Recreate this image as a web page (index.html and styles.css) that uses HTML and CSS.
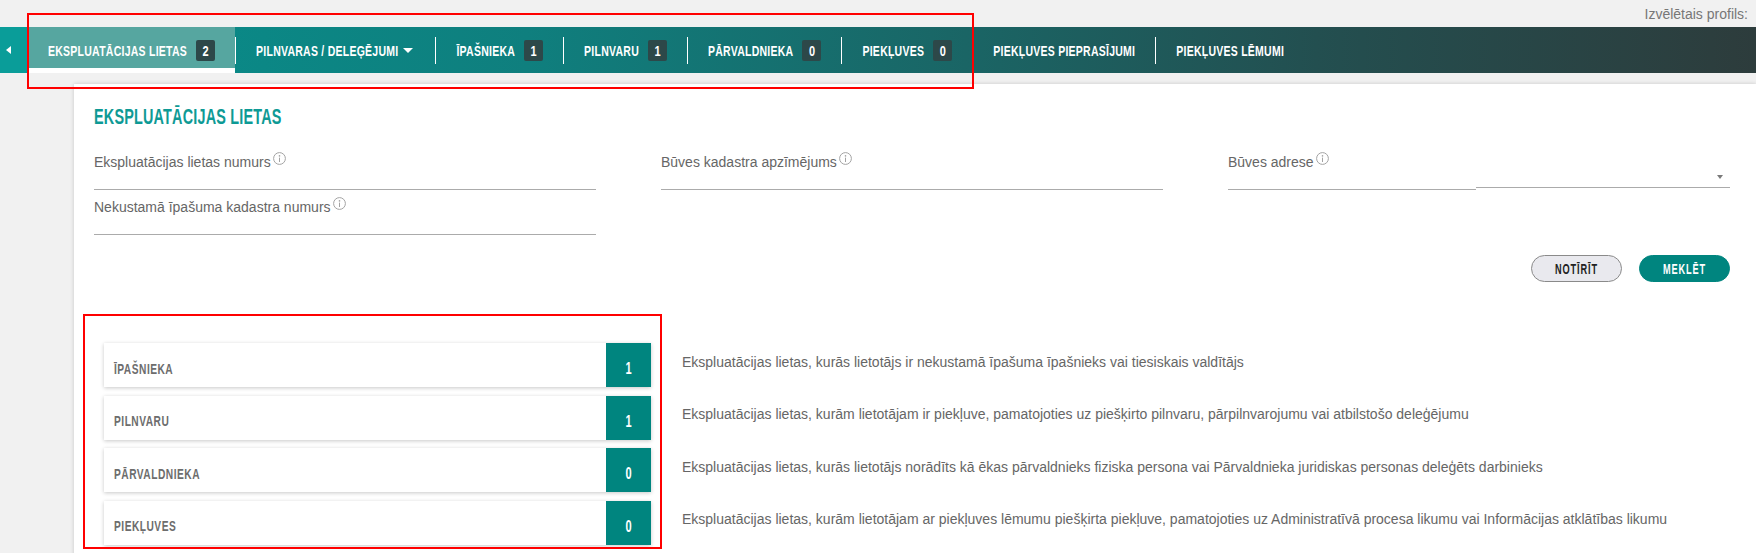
FILE: index.html
```html
<!DOCTYPE html>
<html lang="lv">
<head>
<meta charset="utf-8">
<title>Ekspluatācijas lietas</title>
<link rel="stylesheet" href="styles.css">
</head>
<body>
<header class="topbar"><span class="profile">Izvēlētais profils:</span></header>

<nav class="nav">
  <a class="nav-back" href="#"><span class="tri-left"></span></a>
  <a class="nav-item active" href="#"><span class="cond">EKSPLUATĀCIJAS LIETAS</span><span class="badge"><span class="cond">2</span></span></a>
  <span class="sep"></span>
  <a class="nav-item" href="#"><span class="cond">PILNVARAS / DELEĢĒJUMI</span><span class="caret"></span></a>
  <span class="sep"></span>
  <a class="nav-item" href="#"><span class="cond">ĪPAŠNIEKA</span><span class="badge"><span class="cond">1</span></span></a>
  <span class="sep"></span>
  <a class="nav-item" href="#"><span class="cond">PILNVARU</span><span class="badge"><span class="cond">1</span></span></a>
  <span class="sep"></span>
  <a class="nav-item" href="#"><span class="cond">PĀRVALDNIEKA</span><span class="badge"><span class="cond">0</span></span></a>
  <span class="sep"></span>
  <a class="nav-item" href="#"><span class="cond">PIEKĻUVES</span><span class="badge"><span class="cond">0</span></span></a>
  <span class="sep"></span>
  <a class="nav-item" href="#"><span class="cond">PIEKĻUVES PIEPRASĪJUMI</span></a>
  <span class="sep"></span>
  <a class="nav-item" href="#"><span class="cond">PIEKĻUVES LĒMUMI</span></a>
</nav>

<main class="page">
  <section class="card">
    <h1 class="title">EKSPLUATĀCIJAS LIETAS</h1>

    <div class="form-grid">
      <div class="field">
        <div class="label">Ekspluatācijas lietas numurs<svg class="info" viewBox="0 0 13 13" width="13" height="13"><circle cx="6.5" cy="6.5" r="5.9" fill="none" stroke="#a3a3a3" stroke-width="1"/><circle cx="6.5" cy="3.9" r="0.8" fill="#a3a3a3"/><rect x="6" y="5.6" width="1" height="4.4" fill="#a3a3a3"/></svg></div>
        <div class="input"></div>
      </div>
      <div class="field">
        <div class="label">Būves kadastra apzīmējums<svg class="info" viewBox="0 0 13 13" width="13" height="13"><circle cx="6.5" cy="6.5" r="5.9" fill="none" stroke="#a3a3a3" stroke-width="1"/><circle cx="6.5" cy="3.9" r="0.8" fill="#a3a3a3"/><rect x="6" y="5.6" width="1" height="4.4" fill="#a3a3a3"/></svg></div>
        <div class="input"></div>
      </div>
      <div class="combo">
        <div class="field combo-main">
          <div class="label">Būves adrese<svg class="info" viewBox="0 0 13 13" width="13" height="13"><circle cx="6.5" cy="6.5" r="5.9" fill="none" stroke="#a3a3a3" stroke-width="1"/><circle cx="6.5" cy="3.9" r="0.8" fill="#a3a3a3"/><rect x="6" y="5.6" width="1" height="4.4" fill="#a3a3a3"/></svg></div>
          <div class="input"></div>
        </div>
        <div class="select"><span class="select-caret"></span></div>
      </div>
      <div class="field">
        <div class="label">Nekustamā īpašuma kadastra numurs<svg class="info" viewBox="0 0 13 13" width="13" height="13"><circle cx="6.5" cy="6.5" r="5.9" fill="none" stroke="#a3a3a3" stroke-width="1"/><circle cx="6.5" cy="3.9" r="0.8" fill="#a3a3a3"/><rect x="6" y="5.6" width="1" height="4.4" fill="#a3a3a3"/></svg></div>
        <div class="input"></div>
      </div>
    </div>

    <div class="actions">
      <button class="btn btn-clear" type="button"><span class="cond">NOTĪRĪT</span></button>
      <button class="btn btn-search" type="button"><span class="cond">MEKLĒT</span></button>
    </div>

    <div class="summary">
      <div class="sum-row">
        <div class="sum-card"><span class="sum-label"><span class="cond">ĪPAŠNIEKA</span></span><span class="sum-count"><span class="cond">1</span></span></div>
        <p class="sum-desc">Ekspluatācijas lietas, kurās lietotājs ir nekustamā īpašuma īpašnieks vai tiesiskais valdītājs</p>
      </div>
      <div class="sum-row">
        <div class="sum-card"><span class="sum-label"><span class="cond">PILNVARU</span></span><span class="sum-count"><span class="cond">1</span></span></div>
        <p class="sum-desc">Ekspluatācijas lietas, kurām lietotājam ir piekļuve, pamatojoties uz piešķirto pilnvaru, pārpilnvarojumu vai atbilstošo deleģējumu</p>
      </div>
      <div class="sum-row">
        <div class="sum-card"><span class="sum-label"><span class="cond">PĀRVALDNIEKA</span></span><span class="sum-count"><span class="cond">0</span></span></div>
        <p class="sum-desc">Ekspluatācijas lietas, kurās lietotājs norādīts kā ēkas pārvaldnieks fiziska persona vai Pārvaldnieka juridiskas personas deleģēts darbinieks</p>
      </div>
      <div class="sum-row">
        <div class="sum-card"><span class="sum-label"><span class="cond">PIEKĻUVES</span></span><span class="sum-count"><span class="cond">0</span></span></div>
        <p class="sum-desc">Ekspluatācijas lietas, kurām lietotājam ar piekļuves lēmumu piešķirta piekļuve, pamatojoties uz Administratīvā procesa likumu vai Informācijas atklātības likumu</p>
      </div>
    </div>
  </section>
</main>

<div class="annot annot-nav"></div>
<div class="annot annot-cards"></div>
</body>
</html>
```

FILE: styles.css
```css
* { box-sizing: border-box; }

html, body { margin: 0; padding: 0; }

body {
  position: relative;
  width: 1756px;
  height: 553px;
  overflow: hidden;
  background: #f1f1f1;
  font-family: "Liberation Sans", Arial, sans-serif;
  color: #666;
}

/* tall, narrow display lettering (stand-in for a condensed display face) */
.cond {
  display: inline-block;
  font-family: "Liberation Sans", Arial, sans-serif;
  font-weight: 700;
  line-height: normal;
  transform: scaleY(1.38);
}

/* ---------- top bar ---------- */
.topbar {
  height: 27px;
  padding: 2px 8px 0 0;
  text-align: right;
  font-size: 14px;
  line-height: 25px;
  color: #777;
}

/* ---------- navigation ---------- */
.nav {
  display: flex;
  align-items: stretch;
  height: 46px;
  background: linear-gradient(90deg, #078f8c 0%, #0f7f7e 30%, #1a6565 55%, #234f50 75%, #2d3c3c 100%);
}

.nav-back {
  width: 28px;
  flex: 0 0 28px;
  display: flex;
  align-items: center;
  padding-left: 6px;
  background: #0a9d99;
}

.tri-left {
  width: 0;
  height: 0;
  border-top: 4.5px solid transparent;
  border-bottom: 4.5px solid transparent;
  border-right: 5.5px solid #fff;
}

.nav-item {
  display: flex;
  align-items: center;
  padding: 0 20px;
  color: #fff;
  text-decoration: none;
  white-space: nowrap;
  font-size: 10.5px;
  letter-spacing: 0.25px;
}

.nav-item.active {
  background: #56a6a0;
  box-shadow: inset 0 -5px 0 #fff;
}

.badge {
  display: inline-flex;
  align-items: center;
  justify-content: center;
  width: 19px;
  height: 21px;
  margin-left: 9px;
  border-radius: 2px;
  background: #2d4849;
  color: #fff;
  font-size: 11px;
  letter-spacing: 0;
}

.caret {
  width: 0;
  height: 0;
  margin: 0 2px 0 5px;
  border-left: 5px solid transparent;
  border-right: 5px solid transparent;
  border-top: 5px solid #fff;
}

.sep {
  align-self: center;
  width: 1px;
  height: 27px;
  background: #fff;
}

/* ---------- page / card ---------- */
.page {
  padding-top: 11px;
}

.card {
  margin-left: 74px;
  min-height: 480px;
  padding: 21px 26px 0 20px;
  background: #fff;
  box-shadow: 0 0 4px rgba(0, 0, 0, 0.18);
}

.title {
  margin: 0 0 25px 0;
  font-family: "Liberation Sans", Arial, sans-serif;
  font-weight: 700;
  font-size: 14.4px;
  letter-spacing: 0.2px;
  line-height: 22px;
  color: #0e9a95;
  transform: scaleY(1.5);
  transform-origin: left center;
}

/* ---------- form ---------- */
.form-grid {
  display: grid;
  grid-template-columns: repeat(3, 1fr);
  column-gap: 65px;
  row-gap: 7px;
}

.field {
  display: flex;
  flex-direction: column;
}

.label {
  font-size: 14px;
  line-height: 20px;
  color: #666;
  white-space: nowrap;
}

.info {
  margin-left: 2px;
  vertical-align: 2px;
}

.input {
  height: 18px;
  border-bottom: 1px solid #ababab;
}

.combo {
  display: flex;
  align-items: flex-end;
}

.combo-main {
  flex: 0 0 248px;
}

.select {
  position: relative;
  flex: 1;
  height: 20px;
  margin-bottom: 2px;
  border-bottom: 1px solid #ababab;
}

.select-caret {
  position: absolute;
  right: 7px;
  top: 7px;
  width: 0;
  height: 0;
  border-left: 3.5px solid transparent;
  border-right: 3.5px solid transparent;
  border-top: 4px solid #7a7a7a;
}

/* ---------- buttons ---------- */
.actions {
  display: flex;
  justify-content: flex-end;
  gap: 17px;
  margin-top: 20px;
}

.btn {
  display: flex;
  align-items: center;
  justify-content: center;
  width: 91px;
  height: 27px;
  padding: 0;
  border-radius: 14px;
  font-size: 9.2px;
  letter-spacing: 0.9px;
  cursor: pointer;
}

.btn .cond {
  transform: scaleY(1.5);
}

.btn-clear {
  background: #e9e9ee;
  border: 1.5px solid #8a8a8a;
  color: #222;
}

.btn-search {
  background: #00857f;
  border: 1.5px solid #00857f;
  color: #fff;
}

/* ---------- summary ---------- */
.summary {
  margin: 61px 0 0 10px;
  display: flex;
  flex-direction: column;
  gap: 8.5px;
}

.sum-row {
  display: flex;
  align-items: center;
  gap: 31px;
  height: 44px;
}

.sum-card {
  display: flex;
  flex: 0 0 547px;
  height: 44px;
  background: #fff;
  box-shadow: 0 1px 4px rgba(0, 0, 0, 0.22);
}

.sum-label {
  flex: 1;
  display: flex;
  align-items: center;
  padding: 6px 0 0 10px;
  font-size: 10.2px;
  letter-spacing: 0.5px;
  color: #6d6d6d;
}

.sum-count {
  flex: 0 0 45px;
  display: flex;
  align-items: center;
  justify-content: center;
  padding-top: 6px;
  background: #00857f;
  color: #fff;
  font-size: 11px;
}

.sum-label .cond,
.sum-count .cond {
  transform: scaleY(1.5);
}

.sum-desc {
  margin: 0;
  padding-bottom: 7px;
  font-size: 14px;
  line-height: 16px;
  color: #666;
  white-space: nowrap;
}

/* ---------- annotation frames ---------- */
.annot {
  position: absolute;
  border: 2px solid #f00;
  pointer-events: none;
}

.annot-nav {
  left: 27px;
  top: 13px;
  width: 947px;
  height: 76px;
}

.annot-cards {
  left: 83px;
  top: 314px;
  width: 579px;
  height: 235px;
}
```
